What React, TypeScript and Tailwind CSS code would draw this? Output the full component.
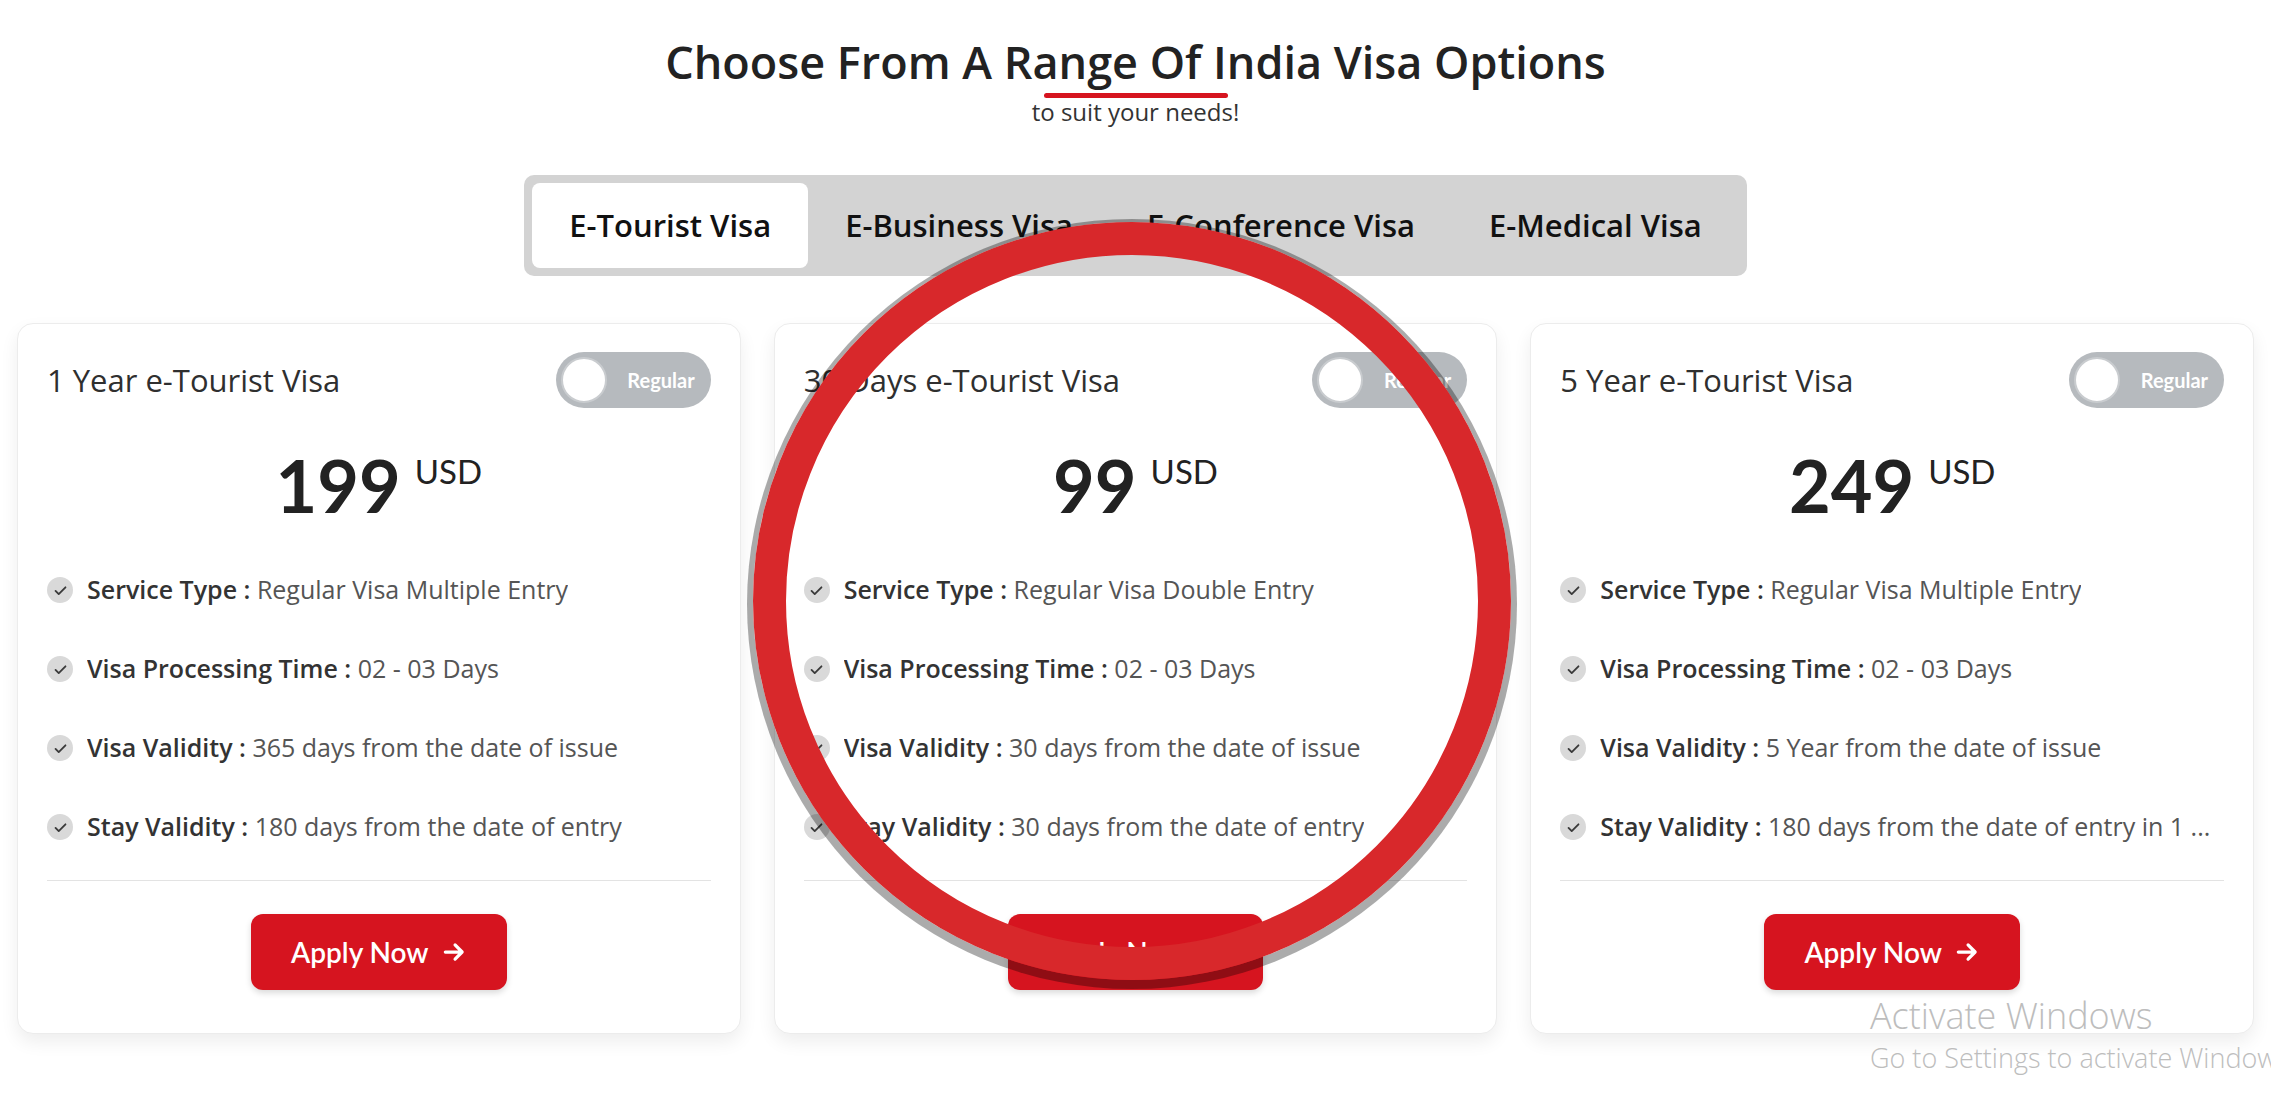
import React from "react";

const font = { fontFamily: "'Open Sans', 'Noto Sans', sans-serif" };
const lato = { fontFamily: "Lato, 'Open Sans', sans-serif" };

type Feature = { label: string; value: string };
type Plan = { title: string; price: string; features: Feature[] };

const plans: Plan[] = [
  {
    title: "1 Year e-Tourist Visa",
    price: "199",
    features: [
      { label: "Service Type", value: "Regular Visa Multiple Entry" },
      { label: "Visa Processing Time", value: "02 - 03 Days" },
      { label: "Visa Validity", value: "365 days from the date of issue" },
      { label: "Stay Validity", value: "180 days from the date of entry" },
    ],
  },
  {
    title: "30 Days e-Tourist Visa",
    price: "99",
    features: [
      { label: "Service Type", value: "Regular Visa Double Entry" },
      { label: "Visa Processing Time", value: "02 - 03 Days" },
      { label: "Visa Validity", value: "30 days from the date of issue" },
      { label: "Stay Validity", value: "30 days from the date of entry" },
    ],
  },
  {
    title: "5 Year e-Tourist Visa",
    price: "249",
    features: [
      { label: "Service Type", value: "Regular Visa Multiple Entry" },
      { label: "Visa Processing Time", value: "02 - 03 Days" },
      { label: "Visa Validity", value: "5 Year from the date of issue" },
      { label: "Stay Validity", value: "180 days from the date of entry in 1 ..." },
    ],
  },
];

const tabs = ["E-Tourist Visa", "E-Business Visa", "E-Conference Visa", "E-Medical Visa"];

function CheckDot() {
  return (
    <span className="flex h-[26px] w-[26px] shrink-0 items-center justify-center rounded-full bg-[#d9d9d9]">
      <svg viewBox="0 0 24 24" className="h-[17px] w-[17px]" fill="none" stroke="#3a3a3a" strokeWidth={2.6} strokeLinecap="round" strokeLinejoin="round">
        <path d="M5 12.5l4.5 4.5L19 7.5" />
      </svg>
    </span>
  );
}

function Toggle() {
  return (
    <div className="flex h-[56px] w-[155px] shrink-0 items-center rounded-full bg-[#b6babe] pl-[5px] pr-[16px]" style={lato}>
      <span className="h-[46px] w-[46px] rounded-full border-2 border-[#c9cccf] bg-white" />
      <span className="ml-auto text-[20px] font-bold text-white">Regular</span>
    </div>
  );
}

function PlanCard({ plan }: { plan: Plan }) {
  return (
    <div className="flex flex-col rounded-[16px] border border-[#ececec] bg-white px-[29px] pt-[28px] pb-[43px] shadow-[0_8px_18px_rgba(0,0,0,0.07)]">
      <div className="flex h-[56px] items-center justify-between">
        <h3 className="text-[31px] text-[#2f2f2f]">{plan.title}</h3>
        <Toggle />
      </div>

      {/* Price */}
      <div className="mt-[41px] flex justify-center" style={lato}>
        <span className="text-[72px] font-bold leading-none text-[#222]">{plan.price}</span>
        <span className="ml-[14px] mt-[6px] text-[33px] leading-none text-[#222]">USD</span>
      </div>

      {/* Features */}
      <ul className="mt-[51px] flex flex-col gap-[43px]">
        {plan.features.map((f) => (
          <li key={f.label} className="flex h-[36px] items-center gap-[14px] text-[25px]">
            <CheckDot />
            <span className="truncate">
              <span className="font-semibold text-[#333]">{f.label} : </span>
              <span className="text-[#555]">{f.value}</span>
            </span>
          </li>
        ))}
      </ul>

      <div className="mt-[35px] h-px bg-[#e3e3e3]" />

      <div className="mt-[33px] flex justify-center" style={lato}>
        <button className="flex h-[76px] items-center gap-[12px] rounded-[12px] bg-[#d6141f] px-[40px] text-[28px] font-semibold text-white shadow-[0_3px_6px_rgba(0,0,0,0.15)]">
          Apply Now
          <svg viewBox="0 0 24 24" className="h-[26px] w-[26px]" fill="none" stroke="currentColor" strokeWidth={3} strokeLinecap="round" strokeLinejoin="round">
            <path d="M4 12h15M13 5.5l6.5 6.5-6.5 6.5" />
          </svg>
        </button>
      </div>
    </div>
  );
}

export default function App() {
  return (
    <div className="relative min-h-screen overflow-hidden bg-white" style={font}>
      {/* Heading */}
      <div className="flex flex-col items-center pt-[39px]">
        <h2 className="text-[45px] font-semibold leading-none text-[#222]">
          Choose From A Range Of India Visa Options
        </h2>
        <div className="mt-[9px] h-[5px] w-[184px] rounded-full bg-[#d6141f]" />
        <p className="mt-[2px] text-[24px] leading-none text-[#333]">to suit your needs!</p>
      </div>

      {/* Tabs */}
      <div className="mt-[51px] flex justify-center">
        <div className="flex rounded-[10px] bg-[#d3d3d3] p-[8px]">
          {tabs.map((t, i) => (
            <button
              key={t}
              className={
                i === 0
                  ? "h-[85px] rounded-[8px] bg-white px-[37px] text-[31px] font-semibold text-[#111]"
                  : "h-[85px] px-[37px] text-[31px] font-semibold text-[#111]"
              }
            >
              {t}
            </button>
          ))}
        </div>
      </div>

      {/* Cards */}
      <div className="mt-[47px] grid grid-cols-3 gap-[33px] px-[17px] pb-[60px]">
        {plans.map((p) => (
          <PlanCard key={p.title} plan={p} />
        ))}
      </div>

      {/* Red annotation ring */}
      <div className="pointer-events-none absolute left-[753px] top-[222px] h-[758px] w-[758px] rounded-full border-[33px] border-[#d8282b] shadow-[0_3px_0_6px_rgba(0,0,0,0.33)]" />

      {/* Windows watermark */}
      <div className="pointer-events-none absolute left-[1870px] top-[998px] whitespace-nowrap text-[#bdbdbd]">
        <div className="text-[36px] font-light leading-none">Activate Windows</div>
        <div className="mt-[10px] text-[27px] font-light leading-none">Go to Settings to activate Windows.</div>
      </div>
    </div>
  );
}
